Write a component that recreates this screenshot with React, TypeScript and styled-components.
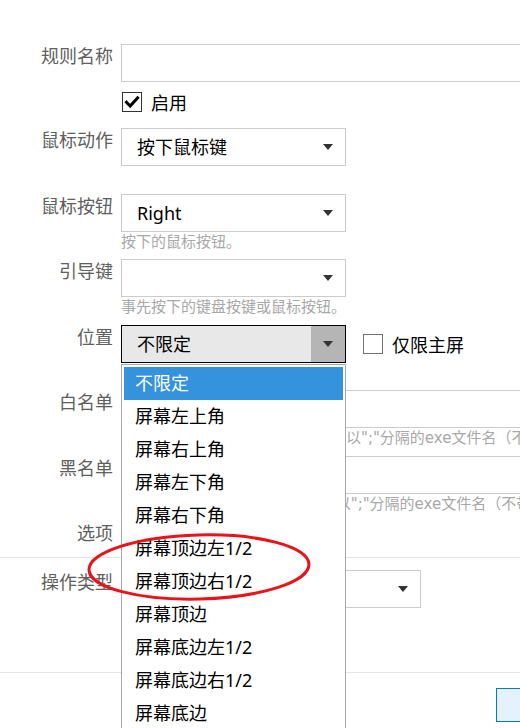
import React from 'react';
import styled, { createGlobalStyle } from 'styled-components';

const GlobalStyle = createGlobalStyle`
  html, body { margin: 0; padding: 0; background: #fff; overflow: hidden; }
  body {
    width: 520px;
    height: 728px;
    font-family: "Noto Sans", "Noto Sans CJK SC", sans-serif;
  }
  * { box-sizing: border-box; }
`;

const Window = styled.div`
  position: relative;
  width: 720px;
  padding-top: 44px;
  color: #000;
`;

const Section = styled.div<{ $top?: number; $bottom?: number }>`
  display: flex;
  flex-direction: column;
  padding-top: ${p => p.$top ?? 0}px;
  padding-bottom: ${p => p.$bottom ?? 0}px;
`;

const Row = styled.div<{ $gap?: number }>`
  display: grid;
  grid-template-columns: 113px 1fr;
  column-gap: 8px;
  padding-right: 20px;
  margin-bottom: ${p => p.$gap ?? 7.5}px;
`;

const Label = styled.div`
  text-align: right;
  font-size: 18px;
  line-height: 24px;
  color: #606060;
  white-space: nowrap;
`;

const Control = styled.div`
  display: flex;
  flex-direction: column;
  min-width: 0;
`;

const Inline = styled.div`
  display: flex;
  align-items: center;
`;

const Hint = styled.div`
  font-family: "DejaVu Sans", "Noto Sans CJK SC", sans-serif;
  font-size: 15px;
  line-height: 20px;
  height: 20px;
  color: #a8a8a8;
  white-space: pre;
`;

const TextBox = styled.div`
  width: 100%;
  height: 38px;
  border: 1px solid #cccccc;
  background: #fff;
`;

const SelectWrap = styled.div`
  position: relative;
`;

const SelectBox = styled.div<{ $open?: boolean; $width?: number }>`
  width: ${p => p.$width ?? 225}px;
  height: 38px;
  display: flex;
  align-items: stretch;
  border: 1px solid ${p => (p.$open ? '#000' : '#cccccc')};
  background: ${p => (p.$open ? '#e8e8e8' : '#fff')};
`;

const SelectText = styled.div`
  flex: 1;
  padding-left: 15px;
  font-size: 18px;
  line-height: 36px;
  color: #000;
  white-space: nowrap;
  overflow: hidden;
`;

const ArrowBox = styled.div<{ $open?: boolean }>`
  width: 34px;
  display: flex;
  align-items: center;
  justify-content: center;
  background: ${p => (p.$open ? '#b5b5b5' : 'transparent')};
`;

const Triangle = styled.div`
  width: 0;
  height: 0;
  border-left: 5px solid transparent;
  border-right: 5px solid transparent;
  border-top: 6px solid #333;
`;

const DropList = styled.div`
  position: absolute;
  top: 100%;
  left: 0;
  margin-top: 1px;
  width: 225px;
  padding: 2px;
  background: #fff;
  border: 1px solid #a8a8a8;
  z-index: 10;
`;

const DropItem = styled.div<{ $selected?: boolean }>`
  height: 33px;
  padding-left: 11px;
  font-size: 18px;
  line-height: 33px;
  white-space: nowrap;
  color: ${p => (p.$selected ? '#fff' : '#000')};
  background: ${p => (p.$selected ? '#3592dd' : 'transparent')};
`;

const CheckLabel = styled.label<{ $indent?: number }>`
  display: flex;
  align-items: center;
  height: 24px;
  margin-left: ${p => p.$indent ?? 0}px;
  font-size: 18px;
  color: #000;
  gap: 9px;
  white-space: nowrap;
`;

const CheckBoxMark = styled.span<{ $checked?: boolean }>`
  width: 20px;
  height: 20px;
  margin-left: 1px;
  border: 1px solid ${p => (p.$checked ? '#333' : '#707070')};
  background: #fff;
  display: flex;
  align-items: center;
  justify-content: center;
`;

const Separator = styled.div`
  height: 1px;
  background: #e4e4e4;
`;

const Footer = styled.div`
  display: flex;
  justify-content: flex-end;
  gap: 10px;
  padding: 15px 14px 0 0;
`;

const Button = styled.button<{ $primary?: boolean }>`
  width: 100px;
  height: 34px;
  font-family: inherit;
  font-size: 16px;
  border: 1px solid ${p => (p.$primary ? '#0078d7' : '#adadad')};
  background: ${p => (p.$primary ? '#e5f1fb' : '#e1e1e1')};
  color: #000;
`;

const Annotation = styled.svg`
  position: absolute;
  left: 84px;
  top: 530px;
  pointer-events: none;
  z-index: 20;
`;

const Check = ({ checked }: { checked?: boolean }) => (
  <CheckBoxMark $checked={checked}>
    {checked && (
      <svg width="16" height="16" viewBox="0 0 16 16">
        <path d="M2.5 8.2 L6.2 12 L13.6 3.8" fill="none" stroke="#000" strokeWidth="3" strokeLinecap="square" />
      </svg>
    )}
  </CheckBoxMark>
);

const Select = ({ value, open, width }: { value: string; open?: boolean; width?: number }) => (
  <SelectBox $open={open} $width={width}>
    <SelectText>{value}</SelectText>
    <ArrowBox $open={open}>
      <Triangle />
    </ArrowBox>
  </SelectBox>
);

const positions = [
  '不限定',
  '屏幕左上角',
  '屏幕右上角',
  '屏幕左下角',
  '屏幕右下角',
  '屏幕顶边左1/2',
  '屏幕顶边右1/2',
  '屏幕顶边',
  '屏幕底边左1/2',
  '屏幕底边右1/2',
  '屏幕底边',
];

export default function App() {
  return (
    <>
      <GlobalStyle />
      <Window>
        <Section>
          <Row $gap={8}>
            <Label>规则名称</Label>
            <Control>
              <TextBox />
            </Control>
          </Row>
          <Row $gap={14}>
            <Label />
            <Control>
              <CheckLabel>
                <Check checked />
                启用
              </CheckLabel>
            </Control>
          </Row>
          <Row>
            <Label>鼠标动作</Label>
            <Control>
              <Select value="按下鼠标键" />
              <Hint />
            </Control>
          </Row>
          <Row>
            <Label>鼠标按钮</Label>
            <Control>
              <Select value="Right" />
              <Hint>按下的鼠标按钮。</Hint>
            </Control>
          </Row>
          <Row>
            <Label>引导键</Label>
            <Control>
              <Select value="" />
              <Hint>事先按下的键盘按键或鼠标按钮。</Hint>
            </Control>
          </Row>
          <Row>
            <Label>位置</Label>
            <Control>
              <Inline>
                <SelectWrap>
                  <Select value="不限定" open />
                  <DropList>
                    {positions.map((p, i) => (
                      <DropItem key={p} $selected={i === 0}>
                        {p}
                      </DropItem>
                    ))}
                  </DropList>
                </SelectWrap>
                <CheckLabel $indent={16}>
                  <Check />
                  仅限主屏
                </CheckLabel>
              </Inline>
              <Hint />
            </Control>
          </Row>
          <Row>
            <Label>白名单</Label>
            <Control>
              <TextBox />
              <Hint>仅在这些程序中才启用本条规则，以";"分隔的exe文件名（不带路径）</Hint>
            </Control>
          </Row>
          <Row>
            <Label>黑名单</Label>
            <Control>
              <TextBox />
              <Hint>在这些程序中不启用本条规则， 以";"分隔的exe文件名（不带路径）</Hint>
            </Control>
          </Row>
          <Row $gap={12}>
            <Label>选项</Label>
            <Control>
              <CheckLabel>
                <Check />
                全屏时禁用
              </CheckLabel>
            </Control>
          </Row>
        </Section>
        <Separator />
        <Section $top={12} $bottom={64}>
          <Row $gap={0}>
            <Label>操作类型</Label>
            <Control>
              <Select value="发送按键" width={300} />
            </Control>
          </Row>
        </Section>
        <Separator />
        <Footer>
          <Button $primary>确定</Button>
          <Button>取消</Button>
        </Footer>
        <Annotation width="232" height="74" viewBox="0 0 232 74">
          <ellipse
            cx="115"
            cy="37"
            rx="110"
            ry="32"
            fill="none"
            stroke="#e8141a"
            strokeWidth="3"
            transform="rotate(-1.5 115 37)"
          />
        </Annotation>
      </Window>
    </>
  );
}
